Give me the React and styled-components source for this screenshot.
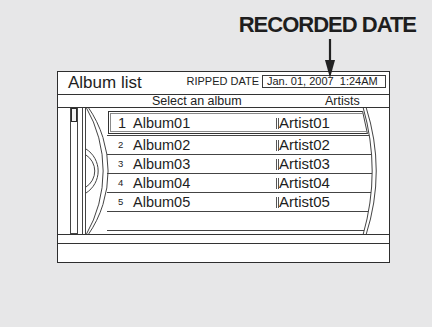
import styled, { createGlobalStyle } from 'styled-components';

const GlobalStyle = createGlobalStyle`
  html, body {
    margin: 0;
    padding: 0;
    background: #e7e7e8;
  }
  body {
    font-family: "Liberation Sans", Arial, sans-serif;
    color: #222;
  }
`;

const Page = styled.div`
  position: relative;
  width: 432px;
  height: 327px;
  padding-top: 14px;
  box-sizing: border-box;
  overflow: hidden;
`;

const Callout = styled.div`
  padding-right: 16px;
  text-align: right;
  font-size: 22px;
  line-height: 22px;
  font-weight: 700;
  letter-spacing: -1px;
  color: #1e1e1e;
`;

const Arrow = styled.svg`
  position: absolute;
  left: 324px;
  top: 38px;
  width: 12px;
  height: 42px;
  z-index: 2;
`;

const Frame = styled.div`
  margin: 35px 0 0 57px;
  width: 333px;
  height: 192px;
  box-sizing: border-box;
  border: 1px solid #2e2e2e;
  background: #fff;
  display: flex;
  flex-direction: column;
`;

const Header = styled.div`
  height: 22px;
  border-bottom: 1px solid #333;
  display: flex;
  align-items: flex-start;
  padding: 0 3px 0 10px;
`;

const Title = styled.div`
  font-size: 17px;
  line-height: 22px;
  color: #1e1e1e;
`;

const DateLabel = styled.div`
  margin: 3px 3px 0 auto;
  font-size: 11px;
  line-height: 13px;
  color: #222;
`;

const DateBox = styled.div`
  margin-top: 3px;
  height: 13px;
  width: 124px;
  box-sizing: border-box;
  border: 1px solid #3a3a3a;
  padding: 0 4px;
  font-size: 11px;
  line-height: 11px;
  white-space: pre;
  color: #222;
`;

const ColumnHeader = styled.div`
  height: 12px;
  border-bottom: 1px solid #333;
  display: grid;
  grid-template-columns: 173px auto;
  padding-left: 94px;
  font-size: 12.5px;
  line-height: 12px;
  color: #222;
`;

const ListArea = styled.div`
  position: relative;
  height: 126px;
  border-bottom: 1px solid #333;
  display: flex;
  align-items: flex-start;
`;

const Track = styled.div`
  margin-left: 12px;
  width: 8px;
  height: 126px;
  box-sizing: border-box;
  border: 1px solid #444;
  border-top: none;
`;

const Thumb = styled.div`
  width: 6px;
  height: 14px;
  box-sizing: border-box;
  border: 1px solid #2a2a2a;
  background: #f2f2f2;
`;

const Rows = styled.div`
  margin-left: 29px;
  flex: 1;
`;

const Row = styled.div`
  display: flex;
  align-items: center;
  height: ${p => (p.$first ? 27 : 18)}px;
  border-bottom: 1px solid #444;
  padding-left: ${p => (p.$first ? 1 : 11)}px;
  align-items: ${p => (p.$first ? 'flex-start' : 'center')};
`;

const Selected = styled.div`
  margin-top: 3px;
  height: 23px;
  width: 262px;
  box-sizing: border-box;
  border: 1px solid #333;
  box-shadow: inset 0 0 0 1px #fff, inset 0 0 0 2px #8a8a8a;
  padding-left: 9px;
  display: flex;
  align-items: center;
  clip-path: polygon(0 0, 254px 0, 259px 100%, 0 100%);
`;

const Index = styled.span`
  width: 15px;
  font-size: ${p => (p.$big ? 14.5 : 9.5)}px;
  line-height: 18px;
`;

const Album = styled.span`
  width: 143px;
  font-size: 14.5px;
  line-height: 18px;
  color: #1e1e1e;
`;

const Artist = styled.span`
  display: flex;
  align-items: center;
  font-size: 15px;
  line-height: 18px;
  color: #1e1e1e;
`;

const Bars = styled.i`
  display: inline-block;
  width: 1px;
  height: 11px;
  border-left: 1px solid #555;
  border-right: 1px solid #555;
  margin-top: 1px;
`;

const Decor = styled.svg`
  position: absolute;
  left: 0;
  top: 0;
  width: 331px;
  height: 126px;
  pointer-events: none;
`;

const Band = styled.div`
  height: 8px;
  border-bottom: 1px solid #333;
`;

const Footer = styled.div`
  flex: 1;
`;

const albums = [
  { n: 1, album: 'Album01', artist: 'Artist01' },
  { n: 2, album: 'Album02', artist: 'Artist02' },
  { n: 3, album: 'Album03', artist: 'Artist03' },
  { n: 4, album: 'Album04', artist: 'Artist04' },
  { n: 5, album: 'Album05', artist: 'Artist05' },
];

const RowContent = ({ item }) => (
  <>
    <Index $big={item.n === 1}>{item.n}</Index>
    <Album>{item.album}</Album>
    <Artist>
      <Bars />
      {item.artist}
    </Artist>
  </>
);

export default function App() {
  return (
    <Page>
      <GlobalStyle />
      <Callout>RECORDED DATE</Callout>
      <Arrow viewBox="0 0 12 42">
        <line x1="6" y1="1" x2="6" y2="24" stroke="#222" strokeWidth="2.2" />
        <polygon points="1,22 11,22 6,40" fill="#222" />
      </Arrow>

      <Frame>
        <Header>
          <Title>Album list</Title>
          <DateLabel>RIPPED DATE</DateLabel>
          <DateBox>{'Jan. 01, 2007  1:24AM'}</DateBox>
        </Header>

        <ColumnHeader>
          <span>Select an album</span>
          <span>Artists</span>
        </ColumnHeader>

        <ListArea>
          <Track>
            <Thumb />
          </Track>
          <Rows>
            {albums.map(item =>
              item.n === 1 ? (
                <Row key={item.n} $first>
                  <Selected>
                    <RowContent item={item} />
                  </Selected>
                </Row>
              ) : (
                <Row key={item.n}>
                  <RowContent item={item} />
                </Row>
              )
            )}
            <Row />
          </Rows>

          {/* disc outline over the list */}
          <Decor viewBox="0 0 331 126">
            <path d="M305 -1 A232 232 0 0 1 305 127 L331 127 L331 -1 Z" fill="#fff" />
            <g fill="none" stroke="#444" strokeWidth="1">
              <line x1="24.5" y1="0" x2="24.5" y2="126" />
              <line x1="27.5" y1="0" x2="27.5" y2="126" />
              <path d="M28 -1 A128 128 0 0 1 28 127" />
              <path d="M30 -1 A112 112 0 0 1 30 127" />
              <path d="M28 41 A26 26 0 0 1 28 85" />
              <path d="M28 47 A19 19 0 0 1 28 79" />
              <path d="M305 -1 A232 232 0 0 1 305 127" />
              <path d="M308 -1 A210 210 0 0 1 308 127" />
              <line x1="304.5" y1="3" x2="309.5" y2="26" />
            </g>
          </Decor>
        </ListArea>

        <Band />
        <Footer />
      </Frame>
    </Page>
  );
}
